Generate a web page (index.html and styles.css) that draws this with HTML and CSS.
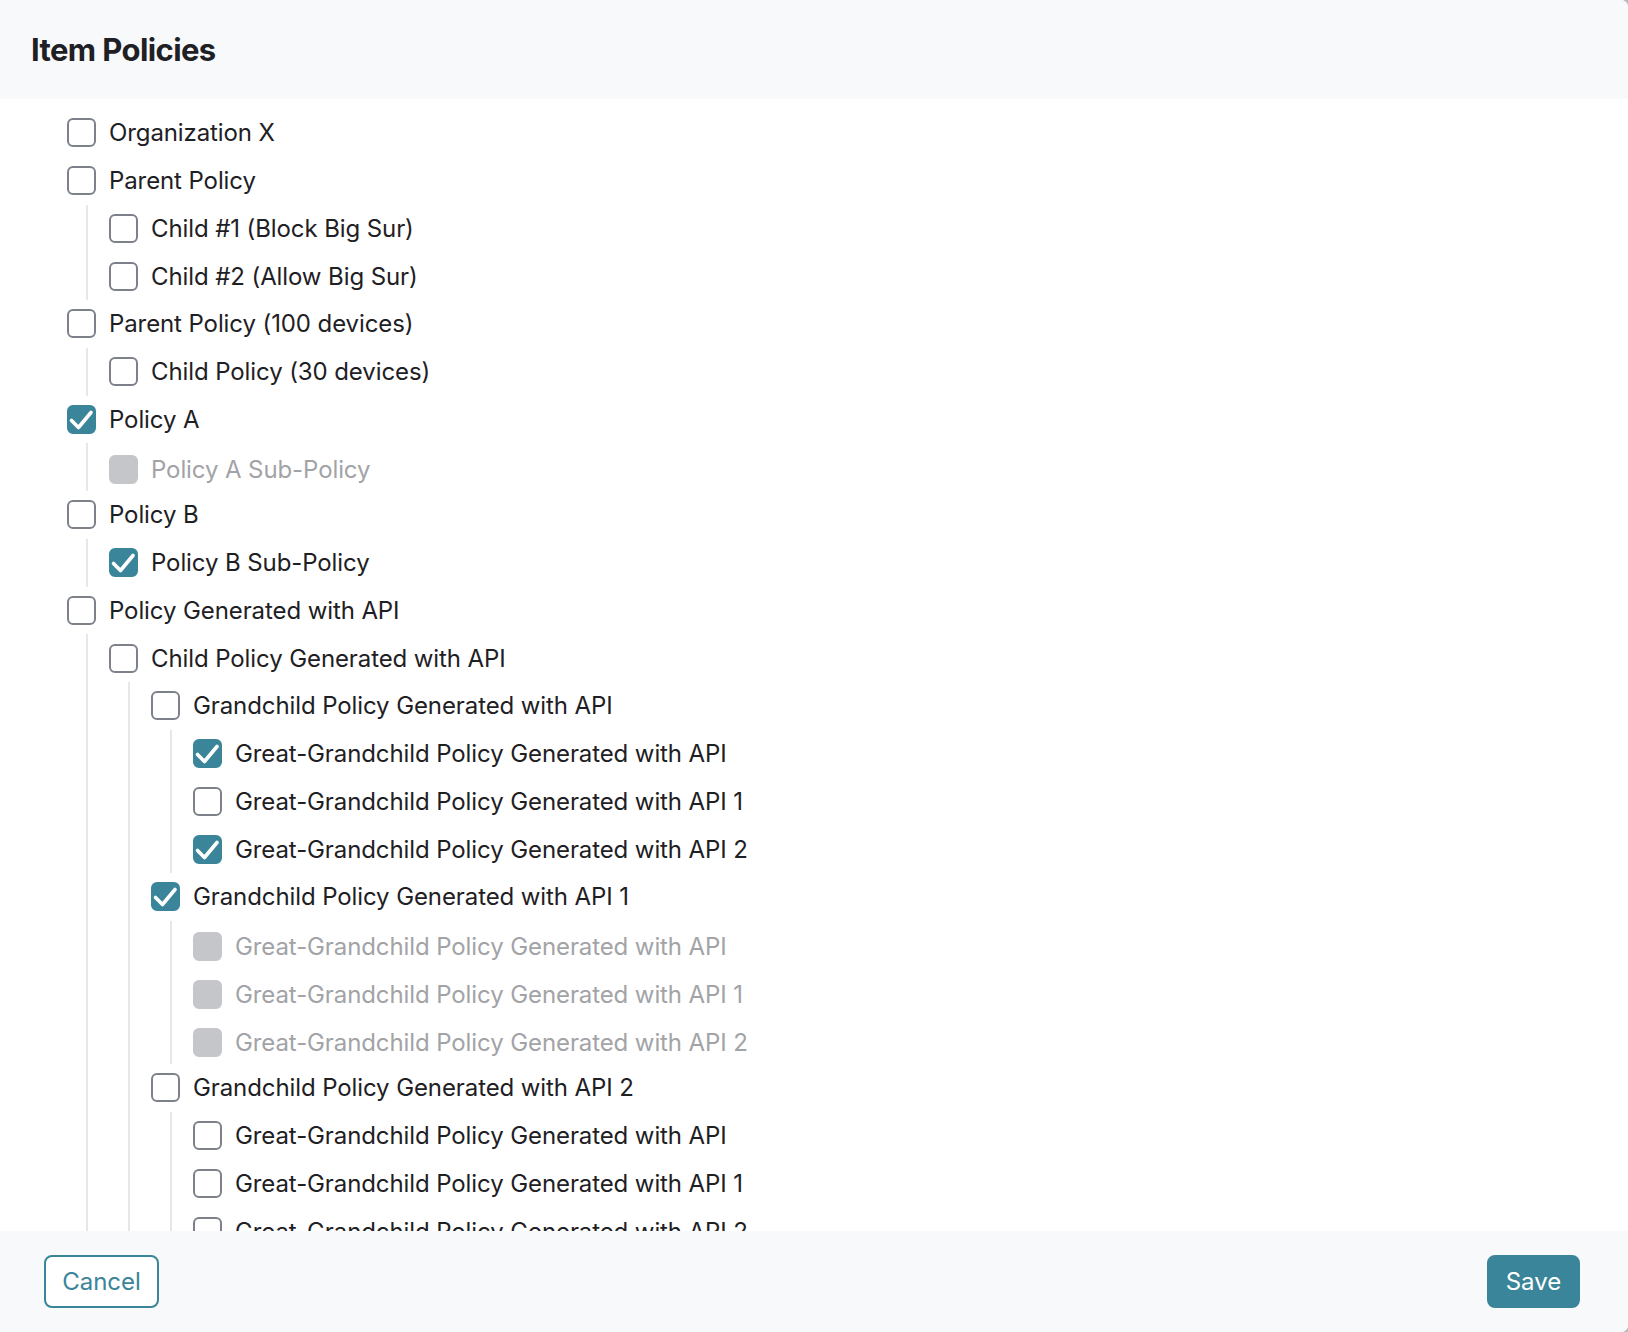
FILE: index.html
```html
<!DOCTYPE html>
<html lang="en">
<head>
<meta charset="utf-8">
<title>Item Policies</title>
<link rel="stylesheet" href="styles.css">
</head>
<body>
<div class="modal">
  <header class="modal-header">
    <h1 class="title">Item Policies</h1>
  </header>
  <main class="modal-body">
    <ul class="tree">
      <li><div class="row"><span class="cb"></span><span class="label">Organization X</span></div></li>
      <li><div class="row"><span class="cb"></span><span class="label">Parent Policy</span></div>
        <ul class="tree children">
          <li><div class="row"><span class="cb"></span><span class="label">Child #1 (Block Big Sur)</span></div></li>
          <li><div class="row"><span class="cb"></span><span class="label">Child #2 (Allow Big Sur)</span></div></li>
        </ul>
      </li>
      <li><div class="row"><span class="cb"></span><span class="label">Parent Policy (100 devices)</span></div>
        <ul class="tree children">
          <li><div class="row"><span class="cb"></span><span class="label">Child Policy (30 devices)</span></div></li>
        </ul>
      </li>
      <li><div class="row"><span class="cb checked"><svg viewBox="0 0 29 29"><path d="M4.5 15.5 L11.5 22.5 L24 7.5"/></svg></span><span class="label">Policy A</span></div>
        <ul class="tree children">
          <li><div class="row disabled"><span class="cb"></span><span class="label">Policy A Sub-Policy</span></div></li>
        </ul>
      </li>
      <li><div class="row"><span class="cb"></span><span class="label">Policy B</span></div>
        <ul class="tree children">
          <li><div class="row"><span class="cb checked"><svg viewBox="0 0 29 29"><path d="M4.5 15.5 L11.5 22.5 L24 7.5"/></svg></span><span class="label">Policy B Sub-Policy</span></div></li>
        </ul>
      </li>
      <li><div class="row"><span class="cb"></span><span class="label">Policy Generated with API</span></div>
        <ul class="tree children">
          <li><div class="row"><span class="cb"></span><span class="label">Child Policy Generated with API</span></div>
            <ul class="tree children">
              <li><div class="row"><span class="cb"></span><span class="label">Grandchild Policy Generated with API</span></div>
                <ul class="tree children">
                  <li><div class="row"><span class="cb checked"><svg viewBox="0 0 29 29"><path d="M4.5 15.5 L11.5 22.5 L24 7.5"/></svg></span><span class="label">Great-Grandchild Policy Generated with API</span></div></li>
                  <li><div class="row"><span class="cb"></span><span class="label">Great-Grandchild Policy Generated with API 1</span></div></li>
                  <li><div class="row"><span class="cb checked"><svg viewBox="0 0 29 29"><path d="M4.5 15.5 L11.5 22.5 L24 7.5"/></svg></span><span class="label">Great-Grandchild Policy Generated with API 2</span></div></li>
                </ul>
              </li>
              <li><div class="row"><span class="cb checked"><svg viewBox="0 0 29 29"><path d="M4.5 15.5 L11.5 22.5 L24 7.5"/></svg></span><span class="label">Grandchild Policy Generated with API 1</span></div>
                <ul class="tree children">
                  <li><div class="row disabled"><span class="cb"></span><span class="label">Great-Grandchild Policy Generated with API</span></div></li>
                  <li><div class="row disabled"><span class="cb"></span><span class="label">Great-Grandchild Policy Generated with API 1</span></div></li>
                  <li><div class="row disabled"><span class="cb"></span><span class="label">Great-Grandchild Policy Generated with API 2</span></div></li>
                </ul>
              </li>
              <li><div class="row"><span class="cb"></span><span class="label">Grandchild Policy Generated with API 2</span></div>
                <ul class="tree children">
                  <li><div class="row"><span class="cb"></span><span class="label">Great-Grandchild Policy Generated with API</span></div></li>
                  <li><div class="row"><span class="cb"></span><span class="label">Great-Grandchild Policy Generated with API 1</span></div></li>
                  <li><div class="row"><span class="cb"></span><span class="label">Great-Grandchild Policy Generated with API 2</span></div></li>
                </ul>
              </li>
            </ul>
          </li>
        </ul>
      </li>
    </ul>
  </main>
  <footer class="modal-footer">
    <button class="btn btn-outline" type="button">Cancel</button>
    <button class="btn btn-primary" type="button">Save</button>
  </footer>
</div>
</body>
</html>
```

FILE: styles.css
```css
* { box-sizing: border-box; }

html, body {
  margin: 0;
  padding: 0;
  height: 100%;
}

body {
  background: #b9babd;
  font-family: Inter, "Noto Sans", "Liberation Sans", sans-serif;
  color: #1e2024;
  overflow: hidden;
}

.modal {
  height: 100vh;
  display: flex;
  flex-direction: column;
  background: #ffffff;
  border-radius: 0 7px 7px 0;
  overflow: hidden;
}

.modal-header {
  height: 99px;
  flex: none;
  background: #f8f9fb;
  display: flex;
  align-items: center;
  padding-left: 31px;
}

.title {
  margin: 0;
  font-size: 31px;
  font-weight: 700;
  color: #1e2024;
  letter-spacing: -0.6px;
  padding-top: 0;
}

.modal-body {
  flex: 1;
  overflow: hidden;
  padding: 10px 0 0 67px;
}

.tree {
  list-style: none;
  margin: 0;
  padding: 0;
}

.tree.children {
  margin-left: 19px;
  border-left: 2px solid #e6e7e9;
  padding-left: 21px;
}

.row {
  display: flex;
  align-items: center;
  height: 47.75px;
}

.row.disabled {
  padding-top: 4px;
}

.cb {
  flex: none;
  width: 29px;
  height: 29px;
  border: 2px solid #7d8189;
  border-radius: 6px;
  margin-right: 13px;
  background: #fff;
  display: flex;
  align-items: center;
  justify-content: center;
}

.cb svg {
  width: 29px;
  height: 29px;
  flex: none;
  display: block;
}

.cb svg path {
  fill: none;
  stroke: #ffffff;
  stroke-width: 3.6;
  stroke-linecap: round;
  stroke-linejoin: round;
}

.cb.checked {
  background: #3a8599;
  border-color: #3a8599;
}

.disabled .cb {
  background: #c5c6ca;
  border-color: #c5c6ca;
}

.label {
  font-size: 24px;
  letter-spacing: -0.1px;
  white-space: nowrap;
}

.disabled .label {
  color: #a2a3a6;
}

.modal-footer {
  height: 101px;
  flex: none;
  background: #f8f9fb;
  display: flex;
  align-items: center;
  justify-content: space-between;
  padding: 0 48px 0 44px;
}

.btn {
  height: 53px;
  border-radius: 8px;
  font-family: Inter, "Noto Sans", "Liberation Sans", sans-serif;
  font-size: 24px;
  letter-spacing: 0;
  cursor: pointer;
}

.btn-outline {
  width: 115px;
  background: #ffffff;
  border: 2px solid #3a8599;
  color: #3a8599;
}

.btn-primary {
  width: 93px;
  background: #3a8599;
  border: 2px solid #3a8599;
  color: #ffffff;
}
```
